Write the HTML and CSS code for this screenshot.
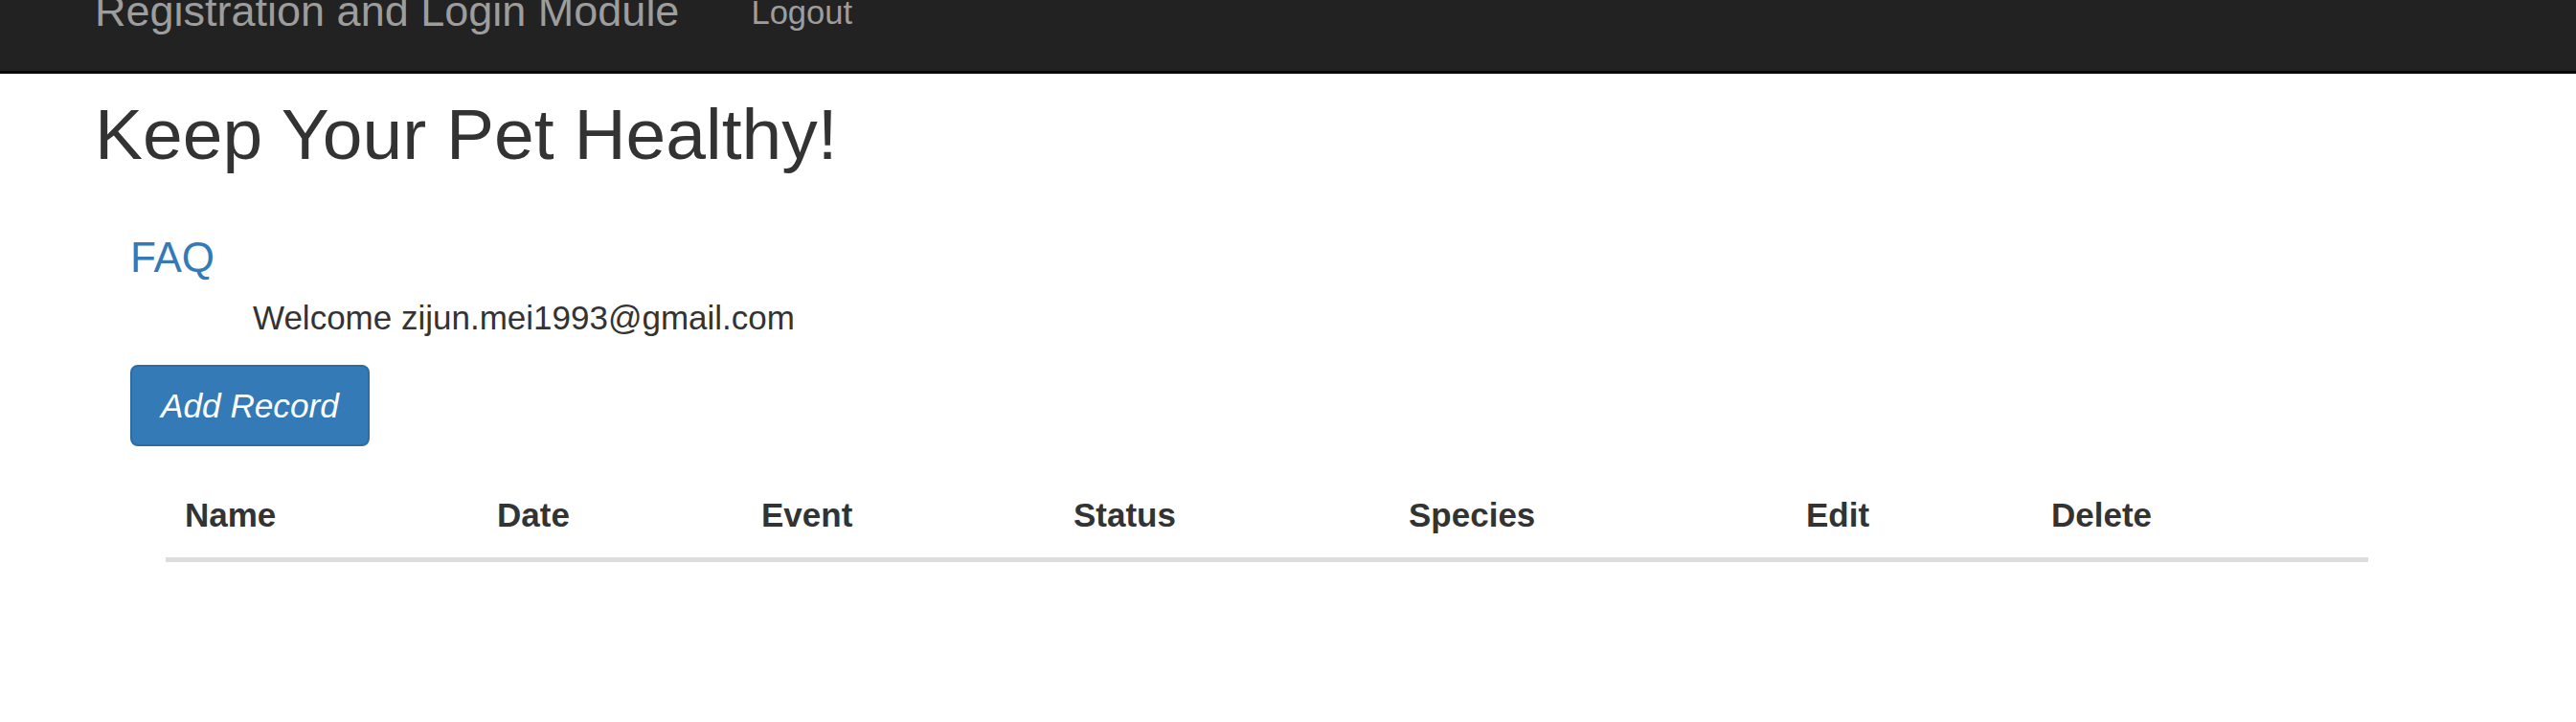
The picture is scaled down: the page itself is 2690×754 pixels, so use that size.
FILE: index.html
```html
<!DOCTYPE html>
<html lang="en">
<head>
<meta charset="utf-8">
<title>Keep Your Pet Healthy!</title>
<link rel="stylesheet" href="styles.css">
</head>
<body>
<nav class="navbar">
  <a class="navbar-brand" href="#">Registration and Login Module</a>
  <a class="nav-link" href="#">Logout</a>
</nav>
<main class="container">
  <h1 class="page-title">Keep Your Pet Healthy!</h1>
  <section class="content">
    <a class="faq-link" href="#">FAQ</a>
    <p class="welcome">Welcome zijun.mei1993@gmail.com</p>
    <button class="btn-primary" type="button">Add Record</button>
    <table class="records">
      <colgroup>
        <col class="col-name">
        <col class="col-date">
        <col class="col-event">
        <col class="col-status">
        <col class="col-species">
        <col class="col-edit">
        <col class="col-delete">
      </colgroup>
      <thead>
        <tr>
          <th>Name</th>
          <th>Date</th>
          <th>Event</th>
          <th>Status</th>
          <th>Species</th>
          <th>Edit</th>
          <th>Delete</th>
        </tr>
      </thead>
      <tbody></tbody>
    </table>
  </section>
</main>
</body>
</html>
```

FILE: styles.css
```css
html, body {
  margin: 0;
  padding: 0;
  background: #ffffff;
}

body {
  font-family: "Liberation Sans", Arial, sans-serif;
  font-size: 35px;
  line-height: 49px;
  color: #333333;
}

a {
  text-decoration: none;
}

.navbar {
  display: flex;
  align-items: flex-start;
  height: 74px;
  padding-left: 99px;
  background: #222222;
  border-bottom: 3px solid #080808;
  overflow: hidden;
}

.navbar-brand {
  font-size: 45px;
  line-height: 44px;
  margin-top: -10px;
  color: #9d9d9d;
}

.nav-link {
  font-size: 34.6px;
  line-height: 34px;
  margin-top: -4px;
  margin-left: 75px;
  color: #9d9d9d;
}

.container {
  padding-left: 99px;
}

.page-title {
  margin: 23px 0 0 0;
  font-size: 75px;
  line-height: 81px;
  font-weight: 500;
  color: #333333;
}

.content {
  display: flex;
  flex-direction: column;
  align-items: flex-start;
  padding-left: 37px;
}

.faq-link {
  margin-top: 65px;
  font-size: 44px;
  line-height: 46px;
  color: #337ab7;
}

.welcome {
  margin: 15px 0 0 128px;
  font-size: 35px;
  line-height: 49px;
}

.btn-primary {
  margin-top: 25px;
  padding: 15px 30px;
  font-family: "Liberation Sans", Arial, sans-serif;
  font-size: 35.2px;
  font-style: italic;
  line-height: 51px;
  color: #ffffff;
  background: #337ab7;
  border: 2px solid #2e6da4;
  border-radius: 8px;
}

.records {
  margin: 27px 0 0 37px;
  width: 2300px;
  table-layout: fixed;
  border-collapse: collapse;
  border-spacing: 0;
}

.records th {
  padding: 20px 20px 20px 20px;
  font-size: 35px;
  line-height: 49px;
  font-weight: bold;
  text-align: left;
  border-bottom: 5px solid #dddddd;
}

.col-name { width: 326px; }
.col-date { width: 276px; }
.col-event { width: 326px; }
.col-status { width: 350px; }
.col-species { width: 415px; }
.col-edit { width: 256px; }
.col-delete { width: 351px; }
```
